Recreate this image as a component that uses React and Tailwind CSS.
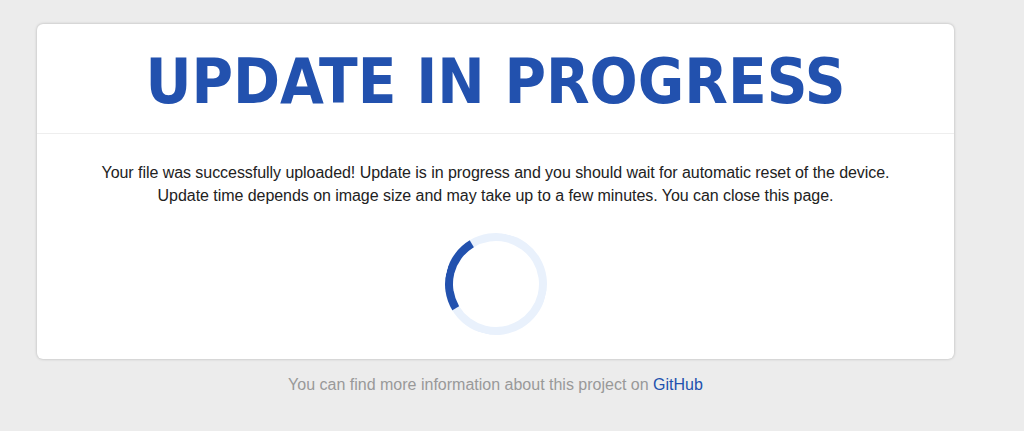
import React from 'react';

export default function App() {
    return (
        <div className="min-h-[431px] bg-[#ececec] pt-6 font-['Liberation_Sans',Arial,sans-serif]">
            {/* Card */}
            <div className="ml-[37px] w-[917px] bg-white rounded-md shadow-[0_0_3px_rgba(0,0,0,0.25)]">
                <div className="h-[110px] pt-[6px] flex items-center justify-center border-b border-[#eeeeee]">
                    <h1 className="text-[63px] leading-none font-bold text-[#2251ae] font-['DejaVu_Sans_Condensed','DejaVu_Sans',Verdana,sans-serif] [font-stretch:condensed]">
                        UPDATE IN PROGRESS
                    </h1>
                </div>
                <div className="pt-[27px] pb-[24px] flex flex-col items-center">
                    <p className="text-center text-base leading-[23px] tracking-[-0.05px] text-[#222222]">
                        Your file was successfully uploaded! Update is in progress and you should wait for automatic reset of the device.
                        <br />
                        Update time depends on image size and may take up to a few minutes. You can close this page.
                    </p>
                    <div className="mt-[26px] w-[102px] h-[102px] rounded-full border-8 border-[#e9f1fc] border-l-[#2251ae] rotate-[14deg]"></div>
                </div>
            </div>

            {/* Footer */}
            <p className="ml-[37px] w-[917px] mt-[14px] text-center text-base text-[#999999]">
                You can find more information about this project on <a href="#" className="text-[#2251ae]">GitHub</a>
            </p>
        </div>
    );
}
